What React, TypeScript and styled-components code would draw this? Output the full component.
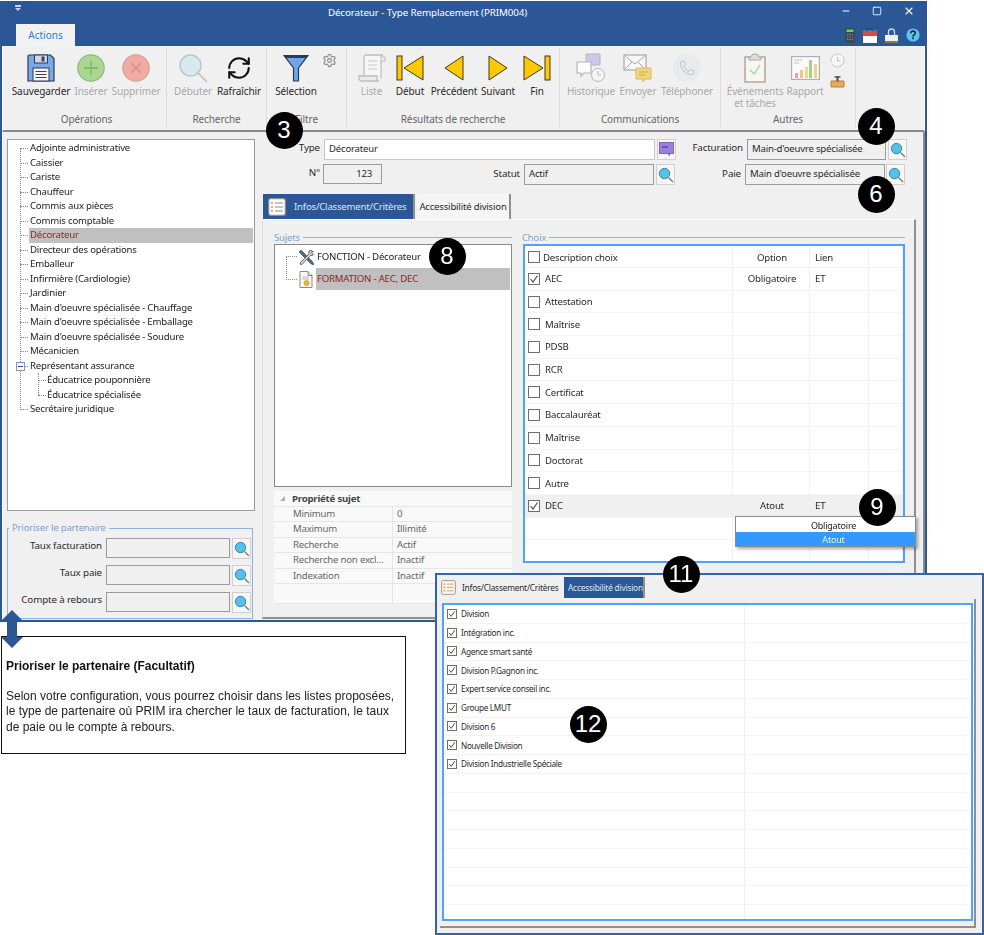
import React from 'react';
import styled, {createGlobalStyle} from 'styled-components';
import {RefreshCw, Settings, Phone, Minus, Square, X} from 'lucide-react';

const GlobalStyle = createGlobalStyle`
  html, body {
    margin: 0;
    padding: 0;
    background: #fff;
  }
  * {
    box-sizing: border-box;
  }
`;

const UI_FONT = `'Noto Sans', 'Open Sans', sans-serif`;
const BLUE = '#2b5797';
const LINE_BLUE = '#4da3ff';

const Page = styled.div`
  position: relative;
  width: 984px;
  height: 935px;
  overflow: hidden;
  padding-top: 1px;
  font-family: ${UI_FONT};
  font-size: 9.6px;
  letter-spacing: -0.2px;
  color: #2a2a2a;
  filter: blur(0.3px);
`;

const Window = styled.div`
  width: 927px;
  height: 621px;
  display: flex;
  flex-direction: column;
  background: ${BLUE};
  padding: 0 2px 2px 2px;
`;

const TitleBar = styled.div`
  position: relative;
  height: 23px;
  flex: none;
  display: flex;
  align-items: center;
  justify-content: center;
  color: #fff;
  font-size: 9.8px;
  letter-spacing: -0.1px;
  padding-right: 72px;
`;

const PinIcon = styled.span`
  position: absolute;
  left: 13px;
  top: 4px;
  width: 6px;
  height: 6px;
  border-top: 2px solid #c8d4e4;
  &::after {
    content: '';
    display: block;
    margin: 1px auto 0;
    width: 0;
    height: 0;
    border-left: 3px solid transparent;
    border-right: 3px solid transparent;
    border-top: 3px solid #c8d4e4;
  }
`;

const WindowControls = styled.div`
  position: absolute;
  right: 10px;
  top: 4px;
  display: flex;
  align-items: center;
  gap: 21px;
  color: #fff;
`;

const TabStrip = styled.div`
  height: 22px;
  flex: none;
  display: flex;
  align-items: flex-end;
  justify-content: space-between;
  padding: 0 5px 0 14px;
`;

const ActionsTab = styled.div`
  width: 59px;
  height: 22px;
  background: #f2f2f2;
  color: #2b7cd3;
  font-size: 10px;
  letter-spacing: 0;
  text-align: center;
  line-height: 22px;
`;

const QuickTools = styled.div`
  display: flex;
  align-items: center;
  gap: 8px;
  height: 22px;
`;

const Ribbon = styled.div`
  height: 86px;
  flex: none;
  display: flex;
  background: #f0f0f0;
  border-left: 1px solid #fff;
  border-right: 1px solid #fff;
  border-bottom: 2px solid #8a8a8a;
  padding: 2px 0 0 4px;
  font-size: 10px;
  letter-spacing: -0.1px;
`;

const RibbonGroup = styled.div<{$w: number}>`
  width: ${p => p.$w}px;
  height: 79px;
  flex: none;
  display: flex;
  flex-direction: column;
  justify-content: space-between;
  border-right: 1px solid #dcdcdc;
`;

const RibbonButtons = styled.div<{$pad?: number}>`
  display: flex;
  align-items: flex-start;
  padding: 5px 0 0 ${p => p.$pad ?? 0}px;
`;

const GroupLabel = styled.div`
  height: 15px;
  text-align: center;
  color: #666;
`;

const RibbonButton = styled.div<{$w: number; $off?: boolean}>`
  width: ${p => p.$w}px;
  flex: none;
  display: flex;
  flex-direction: column;
  align-items: center;
  color: ${p => (p.$off ? '#a9a9a9' : '#2a2a2a')};
  line-height: 12px;
  text-align: center;
  white-space: nowrap;
`;

const IconSlot = styled.div`
  height: 30px;
  margin-bottom: 2px;
  display: flex;
  align-items: center;
  justify-content: center;
`;

const SmallIcons = styled.div<{$w: number; $gap: number}>`
  width: ${p => p.$w}px;
  flex: none;
  display: flex;
  flex-direction: column;
  align-items: center;
  gap: ${p => p.$gap}px;
`;

const Body = styled.div`
  flex: 1;
  min-height: 0;
  display: flex;
  background: #f0f0f0;
  border-left: 1px solid #fff;
  border-right: 2px solid #8a8a8a;
`;

const LeftColumn = styled.div`
  width: 259px;
  flex: none;
  padding: 7px 0 0 4px;
`;

const TreeBox = styled.div`
  width: 248px;
  height: 372px;
  background: #fff;
  border: 1px solid #9a9a9a;
`;

const TreeList = styled.div`
  position: relative;
  margin-top: 1px;
  &::before {
    content: '';
    position: absolute;
    left: 12px;
    top: 7px;
    bottom: 7px;
    border-left: 1px dotted #888;
  }
`;

const TreeRow = styled.div<{$selected?: boolean; $child?: boolean}>`
  position: relative;
  margin-left: 21px;
  width: 224px;
  height: 14.5px;
  line-height: 14.5px;
  padding-left: ${p => (p.$child ? 18 : 1)}px;
  background: ${p => (p.$selected ? '#c0c0c0' : 'transparent')};
  color: ${p => (p.$selected ? '#9b1c1c' : '#222')};
  white-space: nowrap;
  &::before {
    content: '';
    position: absolute;
    top: 7px;
    left: ${p => (p.$child ? 9 : -9)}px;
    width: 8px;
    border-top: 1px dotted #888;
  }
`;

const TreeChildren = styled.div`
  position: relative;
  &::before {
    content: '';
    position: absolute;
    left: 30px;
    top: 0;
    bottom: 7px;
    border-left: 1px dotted #888;
  }
`;

const Expander = styled.span`
  position: absolute;
  left: -13px;
  top: 3px;
  width: 9px;
  height: 9px;
  background: #fff;
  border: 1px solid #7f9db9;
  &::after {
    content: '';
    position: absolute;
    left: 1px;
    right: 1px;
    top: 3px;
    border-top: 1px solid #224a8c;
  }
`;

const PartnerGroup = styled.fieldset`
  width: 246px;
  height: 97px;
  margin: 11px 0 0 0;
  padding: 4px 0 0 0;
  border: 1px solid #8fb2dc;
`;

const PartnerLegend = styled.legend`
  margin-left: 1px;
  padding: 0 3px;
  color: #7ba3d6;
  line-height: 12px;
`;

const PartnerRow = styled.div`
  display: flex;
  height: 27px;
`;

const FieldLabel = styled.div<{$w: number; $top?: number}>`
  width: ${p => p.$w}px;
  flex: none;
  padding-top: ${p => p.$top ?? 0}px;
  font-size: 9.8px;
  letter-spacing: -0.15px;
  line-height: 14px;
  text-align: right;
  white-space: nowrap;
`;

const TextField = styled.div<{$w: number; $h?: number; $off?: boolean; $ml?: number; $right?: boolean}>`
  width: ${p => p.$w}px;
  height: ${p => p.$h ?? 21}px;
  flex: none;
  margin-left: ${p => p.$ml ?? 4}px;
  padding: 0 ${p => (p.$right ? 9 : 4)}px;
  background: ${p => (p.$off ? '#f0f0f0' : '#fff')};
  border: 1.5px solid ${p => (p.$off ? '#9c9c9c' : '#c8c8c8')};
  line-height: 18px;
  text-align: ${p => (p.$right ? 'right' : 'left')};
  white-space: nowrap;
  overflow: hidden;
`;

const SquareButton = styled.div<{$ml?: number}>`
  width: 19px;
  height: 21px;
  flex: none;
  margin-left: ${p => p.$ml ?? 2}px;
  display: flex;
  align-items: center;
  justify-content: center;
  background: #f7f7f7;
  border: 1px solid #d0d0d0;
`;

const RightColumn = styled.div`
  flex: 1;
  min-width: 0;
  display: flex;
  flex-direction: column;
  padding-top: 7px;
`;

const FormRow = styled.div<{$mt?: number}>`
  display: flex;
  margin-top: ${p => p.$mt ?? 0}px;
`;

const TabRow = styled.div`
  display: flex;
  margin: 9px 0 0 1px;
  gap: 2px;
  height: 25px;
  flex: none;
`;

const PanelTab = styled.div<{$active?: boolean; $w: number; $small?: boolean; $plain?: boolean}>`
  width: ${p => p.$w}px;
  height: 100%;
  display: flex;
  align-items: center;
  justify-content: ${p => (p.$active || p.$plain ? 'flex-start' : 'center')};
  gap: ${p => (p.$plain ? 6 : 8)}px;
  padding-left: ${p => (p.$plain ? 1 : p.$active ? (p.$small ? 4 : 5) : 0)}px;
  background: ${p => (p.$active ? BLUE : p.$plain ? '#f0f0f0' : '#f5f5f5')};
  color: ${p => (p.$active ? '#dfe7f2' : '#2a2a2a')};
  border-right: 2px solid ${p => (p.$plain ? 'transparent' : '#8f8f8f')};
  font-size: ${p => (p.$small ? 8.3 : 9.6)}px;
  white-space: nowrap;
`;

const TabPanel = styled.div`
  flex: 1;
  min-height: 0;
  display: flex;
  gap: 11px;
  margin-right: 7px;
  margin-bottom: 1px;
  padding: 10px 0 0 11px;
  border-top: 1px solid #fff;
  border-left: 1px solid #dadada;
  border-right: 2px solid #8f8f8f;
  border-bottom: 2px solid #8f8f8f;
`;

const PanelColumn = styled.div<{$w: number}>`
  width: ${p => p.$w}px;
  flex: none;
`;

const SectionTitle = styled.div<{$ml?: number}>`
  height: 14px;
  display: flex;
  align-items: center;
  gap: 3px;
  margin-left: ${p => p.$ml ?? 0}px;
  color: #7ba3d6;
  &::after {
    content: '';
    flex: 1;
    border-top: 1px solid #8fb2dc;
  }
`;

const SubjectsBox = styled.div`
  position: relative;
  height: 243px;
  background: #fff;
  border: 1px solid #8a8a8a;
  padding: 1px 1px 0 0;
  &::before {
    content: '';
    position: absolute;
    left: 11px;
    top: 11px;
    width: 10px;
    height: 22px;
    border: 1px dotted #888;
    border-right: none;
  }
`;

const SubjectRow = styled.div`
  height: 22px;
  display: flex;
  align-items: center;
  white-space: nowrap;
  padding-left: 21px;
`;

const SubjectIcon = styled.div`
  width: 20px;
  flex: none;
  display: flex;
  justify-content: center;
`;

const SubjectText = styled.div<{$selected?: boolean}>`
  flex: 1;
  height: 100%;
  line-height: 21px;
  padding-left: 1px;
  background: ${p => (p.$selected ? '#c0c0c0' : 'transparent')};
  color: ${p => (p.$selected ? '#9b1c1c' : '#222')};
`;

const PropGrid = styled.div`
  margin-top: 4px;
  height: 113px;
  display: grid;
  grid-template-columns: 119px 1fr;
  grid-template-rows: 16px repeat(5, 15.4px) 1fr;
  background: #f9f9f9;
  color: #666;
`;

const PropHeader = styled.div`
  grid-column: 1 / 3;
  display: flex;
  align-items: center;
  padding-left: 6px;
  gap: 7px;
  font-weight: 700;
  color: #444;
  border-bottom: 1.5px solid #e6e6e6;
`;

const PropCaret = styled.span`
  width: 0;
  height: 0;
  border-left: 5px solid transparent;
  border-bottom: 5px solid #b0b0b0;
`;

const PropCell = styled.div<{$name?: boolean}>`
  padding-left: ${p => (p.$name ? 19 : 4)}px;
  border-bottom: 1.5px solid #e6e6e6;
  border-right: ${p => (p.$name ? '1.5px solid #e6e6e6' : 'none')};
  line-height: 14px;
  white-space: nowrap;
  overflow: hidden;
`;

const ChoiceGrid = styled.div`
  position: relative;
  height: 319px;
  padding-top: 1px;
  background: #fff;
  border: 2px solid ${LINE_BLUE};
  overflow: hidden;
`;

const ChoiceRow = styled.div<{$hot?: boolean; $first?: boolean}>`
  height: ${p => (p.$first ? 21 : 22.7)}px;
  display: grid;
  grid-template-columns: 208px 77px 59px 1fr;
  background: ${p => (p.$hot ? '#f0f0f0' : 'transparent')};
  border-bottom: 1px solid #f3f3f3;
`;

const ChoiceCell = styled.div<{$center?: boolean; $pad?: number}>`
  display: flex;
  align-items: center;
  justify-content: ${p => (p.$center ? 'center' : 'flex-start')};
  padding-left: ${p => p.$pad ?? 0}px;
  border-right: 1px solid #f0f0f0;
`;

const CheckBox = styled.span<{$size?: number}>`
  width: ${p => p.$size ?? 12}px;
  height: ${p => p.$size ?? 12}px;
  flex: none;
  display: flex;
  align-items: center;
  justify-content: center;
  background: #fff;
  border: 1px solid #6e6e6e;
`;

const ChoiceLabel = styled.span<{$first?: boolean}>`
  margin-left: ${p => (p.$first ? 3 : 5)}px;
`;

const DropMenu = styled.div`
  position: absolute;
  left: 735px;
  top: 516px;
  width: 181px;
  height: 31px;
  padding-left: 16px;
  background: #fff;
  border: 1px solid #8a8a8a;
  box-shadow: 2px 2px 3px rgba(0, 0, 0, 0.35);
  font-size: 9px;
  text-align: center;
`;

const DropItem = styled.div<{$active?: boolean}>`
  height: ${p => (p.$active ? 14 : 15)}px;
  margin-left: ${p => (p.$active ? -16 : 0)}px;
  padding-left: ${p => (p.$active ? 16 : 0)}px;
  line-height: ${p => (p.$active ? 15 : 18)}px;
  background: ${p => (p.$active ? '#3399ff' : 'transparent')};
  color: ${p => (p.$active ? '#eaf4ff' : '#222')};
`;

const Badge = styled.div<{$x: number; $y: number}>`
  position: absolute;
  left: ${p => p.$x - 18.5}px;
  top: ${p => p.$y - 18.5}px;
  width: 37px;
  height: 37px;
  display: flex;
  align-items: center;
  justify-content: center;
  border-radius: 50%;
  background: #000;
  color: #fff;
  font-family: 'Liberation Sans', Arial, sans-serif;
  font-size: 24px;
  letter-spacing: 0;
`;

const NoteBox = styled.div`
  width: 405px;
  height: 118px;
  margin: 14px 0 0 1px;
  padding: 22px 4px 0 4px;
  background: #fff;
  border: 1px solid #111;
  font-family: 'Liberation Sans', Arial, sans-serif;
  font-size: 12px;
  letter-spacing: 0;
  color: #222;
`;

const NoteTitle = styled.div`
  font-weight: 700;
  color: #111;
  line-height: 14px;
  margin-bottom: 16px;
`;

const NoteText = styled.div`
  line-height: 15.4px;
`;

const UpDownArrow = styled.svg`
  position: absolute;
  left: 1px;
  top: 610px;
`;

const DivisionWindow = styled.div`
  position: absolute;
  left: 435px;
  top: 573px;
  width: 549px;
  height: 362px;
  background: #f0f0f0;
  border: 2px solid #3563a5;
  padding: 2px 3px 0 3px;
`;

const DivisionTabs = styled.div`
  display: flex;
  height: 21px;
  gap: 1px;
`;

const DivisionPanel = styled.div`
  height: 329px;
  width: 536px;
  margin-top: 1px;
  padding: 4px 0 0 2px;
  border-right: 2px solid #8f8f8f;
  border-bottom: 2px solid #8f8f8f;
`;

const DivisionGrid = styled.div`
  width: 531px;
  height: 318px;
  background: #fff;
  border: 2px solid ${LINE_BLUE};
  overflow: hidden;
`;

const DivisionRow = styled.div`
  height: 18.75px;
  display: grid;
  grid-template-columns: 301px 1fr;
  border-bottom: 1px solid #f3f3f3;
  font-size: 8.2px;
  letter-spacing: -0.3px;
`;

const DivisionCell = styled.div`
  display: flex;
  align-items: center;
  gap: 4px;
  padding-left: 3px;
  border-right: 1px solid #f0f0f0;
`;

const Tick = () => (
  <svg width="10" height="10" viewBox="0 0 10 10">
    <path d="M1.5 5 L4 8 L8.5 1.5" fill="none" stroke="#444" strokeWidth="1.1" />
  </svg>
);

const SmallTick = () => (
  <svg width="8" height="8" viewBox="0 0 10 10">
    <path d="M1.5 5 L4 8 L8.5 1.5" fill="none" stroke="#444" strokeWidth="1.2" />
  </svg>
);

const SearchIcon = () => (
  <svg width="16" height="16" viewBox="0 0 16 16">
    <circle cx="6.5" cy="6.5" r="5.2" fill="#4fc3ea" stroke="#2e6f8c" strokeWidth="0.8" />
    <line x1="10.5" y1="10.5" x2="15" y2="15" stroke="#777" strokeWidth="1.3" />
  </svg>
);

const NoteIcon = () => (
  <svg width="15" height="15" viewBox="0 0 15 15">
    <rect x="0.5" y="0.5" width="14" height="11" fill="#9a7fdc" stroke="#7b62bd" />
    <path d="M8 11.5 L11 14.5 L11 11.5z" fill="#7b62bd" />
    <rect x="3" y="4" width="6" height="2" fill="#6a52a8" />
  </svg>
);

const FloppyIcon = () => (
  <svg width="28" height="28" viewBox="0 0 28 28">
    <path d="M2 1h21.5l3.5 3.5V27H1V2z" fill="#7aa9ea" stroke="#2d3b4e" strokeWidth="1.2" />
    <rect x="7.5" y="1" width="13" height="8" fill="#cfd8e4" stroke="#2d3b4e" />
    <rect x="14.5" y="2.5" width="3" height="5" fill="#3a4a5e" />
    <rect x="6" y="14" width="16" height="13" fill="#f4f4f4" stroke="#2d3b4e" />
    <path d="M8.5 17.5h11M8.5 20.5h11M8.5 23.5h11" stroke="#444" />
  </svg>
);

const CircleAction = ({fill, edge, mark, cross}: {fill: string; edge: string; mark: string; cross?: boolean}) => (
  <svg width="28" height="28" viewBox="0 0 28 28">
    <circle cx="14" cy="14" r="13.2" fill={fill} stroke={edge} strokeWidth="1.2" />
    <path d={cross ? 'M9 9 L19 19 M19 9 L9 19' : 'M14 7 V21 M7 14 H21'} stroke={mark} strokeWidth="1.3" />
  </svg>
);

const PaleLens = () => (
  <svg width="30" height="30" viewBox="0 0 30 30">
    <circle cx="12.5" cy="12.5" r="10.5" fill="#d6e9ef" stroke="#b9c6c9" strokeWidth="1.4" />
    <line x1="20" y1="20" x2="29" y2="29" stroke="#bdbdbd" strokeWidth="1.6" />
  </svg>
);

const FunnelIcon = () => (
  <svg width="26" height="28" viewBox="0 0 26 28">
    <path d="M1 1.5 H25 L15.5 14 V27 H10.5 V14 Z" fill="#6fa5ea" stroke="#2d3b4e" strokeWidth="1.2" />
    <path d="M1 1.5 H25 L23 4 H3 Z" fill="#2d3b4e" />
  </svg>
);

const ScrollIcon = () => (
  <svg width="28" height="28" viewBox="0 0 28 28">
    <path d="M6 22 V4 Q6 1 9 1 H25 Q23 1 23 4 V24" fill="#f6f6f6" stroke="#bdbdbd" strokeWidth="1.3" />
    <path d="M23 3 H27 V7 H23" fill="#ececec" stroke="#bdbdbd" />
    <path d="M1 22 H19 V25 Q19 27 21 27 H4 Q1 27 1 24 Z" fill="#ececec" stroke="#bdbdbd" strokeWidth="1.3" />
    <path d="M10 7 H19 M10 11 H19 M10 15 H19" stroke="#c8c8c8" />
  </svg>
);

const NavIcon = ({kind}: {kind: 'first' | 'prev' | 'next' | 'last'}) => {
  const fill = '#ffc800';
  const edge = '#3c3a22';
  if (kind === 'first') {
    return (
      <svg width="28" height="26" viewBox="0 0 28 26">
        <rect x="1" y="1" width="5" height="24" fill={fill} stroke={edge} />
        <path d="M8 13 L27 1 V25 Z" fill={fill} stroke={edge} />
      </svg>
    );
  }
  if (kind === 'last') {
    return (
      <svg width="28" height="26" viewBox="0 0 28 26">
        <path d="M20 13 L1 1 V25 Z" fill={fill} stroke={edge} />
        <rect x="22" y="1" width="5" height="24" fill={fill} stroke={edge} />
      </svg>
    );
  }
  return (
    <svg width="20" height="26" viewBox="0 0 20 26">
      <path d={kind === 'prev' ? 'M1 13 L19 1 V25 Z' : 'M19 13 L1 1 V25 Z'} fill={fill} stroke={edge} />
    </svg>
  );
};

const HistoryIcon = () => (
  <svg width="30" height="30" viewBox="0 0 30 30">
    <path d="M10 1 H24 V12 H10 Z" fill="#cfc6f0" stroke="#b5b5b5" />
    <path d="M1 9 H15 V20 H8 L5 23 V20 H1 Z" fill="#fafafa" stroke="#b5b5b5" strokeWidth="1.2" />
    <circle cx="22" cy="22" r="6.5" fill="#f5f5f5" stroke="#b5b5b5" />
    <path d="M22 18 V22 H25" fill="none" stroke="#b5b5b5" />
  </svg>
);

const MailIcon = () => (
  <svg width="30" height="30" viewBox="0 0 30 30">
    <rect x="1" y="2" width="22" height="15" fill="#f7f7f7" stroke="#aaa" strokeWidth="1.2" />
    <path d="M1 2 L12 11 L23 2 M1 17 L9 9 M23 17 L15 9" fill="none" stroke="#aaa" />
    <path d="M13 15 H28 V26 H22 L20 29 V26 H13 Z" fill="#f2d77a" stroke="#d9bb58" />
    <path d="M16 19 H25 M16 22 H22" stroke="#c9a93f" />
  </svg>
);

const PhoneBubble = styled.div`
  width: 28px;
  height: 28px;
  border-radius: 50%;
  background: #e6ecec;
  display: flex;
  align-items: center;
  justify-content: center;
  color: #bcbcbc;
`;

const ClipboardIcon = () => (
  <svg width="22" height="30" viewBox="0 0 22 30">
    <rect x="1" y="4" width="20" height="25" fill="#f7f7f2" stroke="#b5a78f" strokeWidth="1.5" />
    <path d="M7 4 Q7 1 11 1 Q15 1 15 4 H17 V7 H5 V4 Z" fill="#dcdcdc" stroke="#aaa" />
    <path d="M6 17 L10 21 L16 12" fill="none" stroke="#9ed49e" strokeWidth="1.3" />
  </svg>
);

const ReportIcon = () => (
  <svg width="29" height="24" viewBox="0 0 29 24">
    <rect x="0.6" y="0.6" width="27.8" height="22.8" fill="#fafafa" stroke="#b0b0b0" strokeWidth="1.2" />
    <path d="M3 4 H11 M3 7 H8" stroke="#bcbcbc" />
    <rect x="4" y="17" width="3" height="5" fill="#e2a6a0" />
    <rect x="9" y="14" width="3" height="8" fill="#efc48c" />
    <rect x="14" y="11" width="3" height="11" fill="#f0d98a" />
    <rect x="18" y="4" width="3" height="18" fill="#a9cf8e" />
    <rect x="23" y="8" width="3" height="14" fill="#e9d68a" />
  </svg>
);

const ClockIcon = () => (
  <svg width="15" height="15" viewBox="0 0 15 15">
    <circle cx="7.5" cy="7.5" r="6.5" fill="#f6f6f6" stroke="#c4c4c4" strokeDasharray="16 2" />
    <path d="M7.5 4 V8 H10.5" fill="none" stroke="#bdbdbd" />
  </svg>
);

const TrayIcon = () => (
  <svg width="15" height="13" viewBox="0 0 15 13">
    <path d="M1 6 H14 V12 H1 Z" fill="#e7ab5c" stroke="#b9823c" />
    <path d="M4 6 Q7.5 9 11 6" fill="#c98a3a" />
    <rect x="6.5" y="1" width="2" height="5" fill="#5a4a3a" />
    <path d="M4.5 2 H10.5" stroke="#5a4a3a" strokeWidth="1.4" />
  </svg>
);

const CalculatorIcon = () => (
  <svg width="10" height="15" viewBox="0 0 10 15">
    <rect width="10" height="15" fill="#3a4a50" />
    <rect x="1.5" y="1.5" width="7" height="2.5" fill="#6fce5a" />
    <path d="M2 6.5 H8 M2 9 H8 M2 11.5 H8" stroke="#7e8c92" strokeDasharray="1.5 1" />
  </svg>
);

const CalendarIcon = () => (
  <svg width="14" height="15" viewBox="0 0 14 15">
    <rect y="3" width="14" height="12" fill="#fff" stroke="#d8d8d8" strokeWidth="0.5" />
    <rect y="3" width="14" height="5" fill="#dc4a3c" />
    <path d="M7 0.5 L3 3 M7 0.5 L11 3" stroke="#333" strokeWidth="0.7" />
  </svg>
);

const LockIcon = () => (
  <svg width="13" height="15" viewBox="0 0 13 15">
    <path d="M3.5 7 V4 Q3.5 1 6.5 1 Q9.5 1 9.5 4 V7" fill="none" stroke="#ccd3d8" strokeWidth="1.4" />
    <rect y="7" width="13" height="6" fill="#eef0f0" />
    <rect y="13" width="13" height="2" fill="#8a7a4a" />
  </svg>
);

const HelpIcon = () => (
  <svg width="14" height="14" viewBox="0 0 14 14">
    <circle cx="7" cy="7" r="6.6" fill="#5bc3ec" />
    <path d="M4.8 5.2 Q5 3 7 3 Q9.2 3 9.2 5 Q9.2 6.2 8 6.9 Q7 7.4 7 8.7" fill="none" stroke="#12212c" strokeWidth="1.5" />
    <rect x="6.2" y="9.6" width="1.6" height="1.6" fill="#12212c" />
  </svg>
);

const ListTabIcon = ({size = 18, soft}: {size?: number; soft?: boolean}) => (
  <svg width={size} height={size} viewBox="0 0 18 18">
    <rect x="0.7" y="0.7" width="16.6" height="16.6" rx="2" fill={soft ? '#f6f4f2' : '#fff'} stroke={soft ? '#a89a90' : '#8e8e8e'} strokeWidth="1.2" />
    <path d="M3 5 H5 M3 9 H5 M3 13 H5" stroke="#ee8a3c" strokeWidth="1.6" />
    <path d="M7 5 H15 M7 9 H15 M7 13 H15" stroke={soft ? '#e8a878' : '#888'} strokeWidth="1.2" />
  </svg>
);

const ToolsIcon = () => (
  <svg width="17" height="17" viewBox="0 0 17 17">
    <path d="M1 3 L3 1 L9 7 L14 12 L16 15 L15 16 L12 14 L7 9 Z" fill="#4a6a8c" stroke="#333" strokeWidth="0.5" />
    <path d="M15.5 3 Q13 0 11 2 Q10 4 11 5 L2 14 Q2 16 4 15.5 L12.5 6.5 Q14.5 7 15.5 5.5 L13.5 4 L14 2.5 Z" fill="#c9ced2" stroke="#444" strokeWidth="0.7" />
  </svg>
);

const CertificateIcon = () => (
  <svg width="14" height="17" viewBox="0 0 14 17">
    <path d="M1 0.5 H9 L13 4.5 V16.5 H1 Z" fill="#fafafa" stroke="#888" />
    <path d="M9 0.5 V4.5 H13" fill="#e0e0e0" stroke="#888" />
    <path d="M3 6 H10 M3 8 H10" stroke="#bbb" />
    <circle cx="7.5" cy="12" r="2.6" fill="#f2b630" stroke="#c58a10" strokeWidth="0.6" />
  </svg>
);

const JOBS = [
  'Adjointe administrative',
  'Caissier',
  'Cariste',
  'Chauffeur',
  'Commis aux pièces',
  'Commis comptable',
  'Décorateur',
  'Directeur des opérations',
  'Emballeur',
  'Infirmière (Cardiologie)',
  'Jardinier',
  "Main d'oeuvre spécialisée - Chauffage",
  "Main d'oeuvre spécialisée - Emballage",
  "Main d'oeuvre spécialisée - Soudure",
  'Mécanicien',
];

const CHOICES: {label: string; checked?: boolean; option?: string; link?: string; hot?: boolean}[] = [
  {label: 'Description choix', option: 'Option', link: 'Lien'},
  {label: 'AEC', checked: true, option: 'Obligatoire', link: 'ET'},
  {label: 'Attestation'},
  {label: 'Maîtrise'},
  {label: 'PDSB'},
  {label: 'RCR'},
  {label: 'Certificat'},
  {label: 'Baccalauréat'},
  {label: 'Maîtrise'},
  {label: 'Doctorat'},
  {label: 'Autre'},
  {label: 'DEC', checked: true, option: 'Atout', link: 'ET', hot: true},
  {label: ''},
  {label: ''},
];

const PROPS = [
  ['Minimum', '0'],
  ['Maximum', 'Illimité'],
  ['Recherche', 'Actif'],
  ['Recherche non excl...', 'Inactif'],
  ['Indexation', 'Inactif'],
  ['', ''],
];

const DIVISIONS = [
  'Division',
  'Intégration inc.',
  'Agence smart santé',
  'Division P.Gagnon inc.',
  'Expert service conseil inc.',
  'Groupe LMUT',
  'Division 6',
  'Nouvelle Division',
  'Division Industrielle Spéciale',
];

const BADGES = [
  {n: 3, x: 284, y: 130},
  {n: 4, x: 876, y: 126},
  {n: 6, x: 876, y: 194},
  {n: 8, x: 447, y: 256},
  {n: 9, x: 877, y: 507},
  {n: 11, x: 681, y: 574},
  {n: 12, x: 588, y: 724},
];

const PartnerField = ({label}: {label: string}) => (
  <PartnerRow>
    <FieldLabel $w={94} $top={1}>{label}</FieldLabel>
    <TextField $w={124} $h={20} $off />
    <SquareButton><SearchIcon /></SquareButton>
  </PartnerRow>
);

export default function App() {
  return (
    <Page>
      <GlobalStyle />
      <Window>
        <TitleBar>
          <PinIcon />
          Décorateur - Type Remplacement (PRIM004)
          <WindowControls>
            <Minus size={10} strokeWidth={2.4} />
            <Square size={10} strokeWidth={2} />
            <X size={12} strokeWidth={2.2} />
          </WindowControls>
        </TitleBar>
        <TabStrip>
          <ActionsTab>Actions</ActionsTab>
          <QuickTools>
            <CalculatorIcon />
            <CalendarIcon />
            <LockIcon />
            <HelpIcon />
          </QuickTools>
        </TabStrip>
        <Ribbon>
          <RibbonGroup $w={160}>
            <RibbonButtons>
              <RibbonButton $w={68}><IconSlot><FloppyIcon /></IconSlot>Sauvegarder</RibbonButton>
              <RibbonButton $w={32} $off><IconSlot><CircleAction fill="#a9d78f" edge="#8fb978" mark="#7faf68" /></IconSlot>Insérer</RibbonButton>
              <RibbonButton $w={58} $off><IconSlot><CircleAction fill="#f2aaa2" edge="#c9a89c" mark="#d28d84" cross /></IconSlot>Supprimer</RibbonButton>
            </RibbonButtons>
            <GroupLabel>Opérations</GroupLabel>
          </RibbonGroup>
          <RibbonGroup $w={100}>
            <RibbonButtons $pad={1}>
              <RibbonButton $w={50} $off><IconSlot><PaleLens /></IconSlot>Débuter</RibbonButton>
              <RibbonButton $w={42}><IconSlot><RefreshCw size={26} strokeWidth={1.9} color="#111" /></IconSlot>Rafraîchir</RibbonButton>
            </RibbonButtons>
            <GroupLabel>Recherche</GroupLabel>
          </RibbonGroup>
          <RibbonGroup $w={80}>
            <RibbonButtons $pad={3}>
              <RibbonButton $w={52}><IconSlot><FunnelIcon /></IconSlot>Sélection</RibbonButton>
              <SmallIcons $w={14} $gap={0}><Settings size={15} color="#8a8a8a" strokeWidth={1.8} /></SmallIcons>
            </RibbonButtons>
            <GroupLabel>Filtre</GroupLabel>
          </RibbonGroup>
          <RibbonGroup $w={213}>
            <RibbonButtons $pad={6}>
              <RibbonButton $w={37} $off><IconSlot><ScrollIcon /></IconSlot>Liste</RibbonButton>
              <RibbonButton $w={40}><IconSlot><NavIcon kind="first" /></IconSlot>Début</RibbonButton>
              <RibbonButton $w={48}><IconSlot><NavIcon kind="prev" /></IconSlot>Précédent</RibbonButton>
              <RibbonButton $w={40}><IconSlot><NavIcon kind="next" /></IconSlot>Suivant</RibbonButton>
              <RibbonButton $w={38}><IconSlot><NavIcon kind="last" /></IconSlot>Fin</RibbonButton>
            </RibbonButtons>
            <GroupLabel>Résultats de recherche</GroupLabel>
          </RibbonGroup>
          <RibbonGroup $w={161}>
            <RibbonButtons $pad={5}>
              <RibbonButton $w={52} $off><IconSlot><HistoryIcon /></IconSlot>Historique</RibbonButton>
              <RibbonButton $w={42} $off><IconSlot><MailIcon /></IconSlot>Envoyer</RibbonButton>
              <RibbonButton $w={56} $off><IconSlot><PhoneBubble><Phone size={16} strokeWidth={1.4} /></PhoneBubble></IconSlot>Téléphoner</RibbonButton>
            </RibbonButtons>
            <GroupLabel>Communications</GroupLabel>
          </RibbonGroup>
          <RibbonGroup $w={135}>
            <RibbonButtons $pad={6}>
              <RibbonButton $w={56} $off><IconSlot><ClipboardIcon /></IconSlot>Évènements<br />et tâches</RibbonButton>
              <RibbonButton $w={44} $off><IconSlot><ReportIcon /></IconSlot>Rapport</RibbonButton>
              <SmallIcons $w={20} $gap={7}><ClockIcon /><TrayIcon /></SmallIcons>
            </RibbonButtons>
            <GroupLabel>Autres</GroupLabel>
          </RibbonGroup>
        </Ribbon>
        <Body>
          <LeftColumn>
            <TreeBox>
              <TreeList>
                {JOBS.map(job => (
                  <TreeRow key={job} $selected={job === 'Décorateur'}>{job}</TreeRow>
                ))}
                <TreeRow>
                  <Expander />
                  Représentant assurance
                </TreeRow>
                <TreeChildren>
                  <TreeRow $child>Éducatrice pouponnière</TreeRow>
                  <TreeRow $child>Éducatrice spécialisée</TreeRow>
                </TreeChildren>
                <TreeRow>Secrétaire juridique</TreeRow>
              </TreeList>
            </TreeBox>
            <PartnerGroup>
              <PartnerLegend>Prioriser le partenaire</PartnerLegend>
              <PartnerField label="Taux facturation" />
              <PartnerField label="Taux paie" />
              <PartnerField label="Compte à rebours" />
            </PartnerGroup>
          </LeftColumn>
          <RightColumn>
            <FormRow>
              <FieldLabel $w={58} $top={2}>Type</FieldLabel>
              <TextField $w={331}>Décorateur</TextField>
              <SquareButton><NoteIcon /></SquareButton>
              <FieldLabel $w={67} $top={2}>Facturation</FieldLabel>
              <TextField $w={139} $off>Main-d'oeuvre spécialisée</TextField>
              <SquareButton><SearchIcon /></SquareButton>
            </FormRow>
            <FormRow $mt={4}>
              <FieldLabel $w={58} $top={2}>N°</FieldLabel>
              <TextField $w={59} $h={20} $ml={3} $off $right>123</TextField>
              <FieldLabel $w={138} $top={3}>Statut</FieldLabel>
              <TextField $w={130} $off>Actif</TextField>
              <SquareButton><SearchIcon /></SquareButton>
              <FieldLabel $w={66} $top={3}>Paie</FieldLabel>
              <TextField $w={140} $off>Main d'oeuvre spécialisée</TextField>
              <SquareButton $ml={1}><SearchIcon /></SquareButton>
            </FormRow>
            <TabRow>
              <PanelTab $active $w={152}><ListTabIcon />Infos/Classement/Critères</PanelTab>
              <PanelTab $w={94}>Accessibilité division</PanelTab>
            </TabRow>
            <TabPanel>
              <PanelColumn $w={238}>
                <SectionTitle>Sujets</SectionTitle>
                <SubjectsBox>
                  <SubjectRow><SubjectIcon><ToolsIcon /></SubjectIcon><SubjectText>FONCTION - Décorateur</SubjectText></SubjectRow>
                  <SubjectRow><SubjectIcon><CertificateIcon /></SubjectIcon><SubjectText $selected>FORMATION - AEC, DEC</SubjectText></SubjectRow>
                </SubjectsBox>
                <PropGrid>
                  <PropHeader><PropCaret />Propriété sujet</PropHeader>
                  {PROPS.map(([name, value], i) => (
                    <React.Fragment key={i}>
                      <PropCell $name>{name}</PropCell>
                      <PropCell>{value}</PropCell>
                    </React.Fragment>
                  ))}
                </PropGrid>
              </PanelColumn>
              <PanelColumn $w={382}>
                <SectionTitle $ml={-1}>Choix</SectionTitle>
                <ChoiceGrid>
                  {CHOICES.map((c, i) => (
                    <ChoiceRow key={i} $hot={c.hot} $first={i === 0}>
                      <ChoiceCell $pad={3}>
                        {c.label && <CheckBox>{c.checked && <Tick />}</CheckBox>}
                        {c.label && <ChoiceLabel $first={i === 0}>{c.label}</ChoiceLabel>}
                      </ChoiceCell>
                      <ChoiceCell $center $pad={2}>{c.option}</ChoiceCell>
                      <ChoiceCell $pad={5}>{c.link}</ChoiceCell>
                      <ChoiceCell />
                    </ChoiceRow>
                  ))}
                </ChoiceGrid>
              </PanelColumn>
            </TabPanel>
          </RightColumn>
        </Body>
      </Window>
      <NoteBox>
        <NoteTitle>Prioriser le partenaire (Facultatif)</NoteTitle>
        <NoteText>
          Selon votre configuration, vous pourrez choisir dans les listes proposées,
          <br />
          le type de partenaire où PRIM ira chercher le taux de facturation, le taux
          <br />
          de paie ou le compte à rebours.
        </NoteText>
      </NoteBox>
      <UpDownArrow width="22" height="38" viewBox="0 0 22 38">
        <path d="M11 0 L22 11 H16 V27 H22 L11 38 L0 27 H6 V11 H0 Z" fill={BLUE} />
      </UpDownArrow>
      <DropMenu>
        <DropItem>Obligatoire</DropItem>
        <DropItem $active>Atout</DropItem>
      </DropMenu>
      <DivisionWindow>
        <DivisionTabs>
          <PanelTab $w={123} $small $plain><ListTabIcon size={15} soft />Infos/Classement/Critères</PanelTab>
          <PanelTab $w={81} $active $small>Accessibilité division</PanelTab>
        </DivisionTabs>
        <DivisionPanel>
          <DivisionGrid>
            {Array.from({length: 17}).map((_, i) => (
              <DivisionRow key={i}>
                <DivisionCell>
                  {DIVISIONS[i] && <CheckBox $size={10}><SmallTick /></CheckBox>}
                  {DIVISIONS[i]}
                </DivisionCell>
              </DivisionRow>
            ))}
          </DivisionGrid>
        </DivisionPanel>
      </DivisionWindow>
      {BADGES.map(b => (
        <Badge key={b.n} $x={b.x} $y={b.y}>{b.n}</Badge>
      ))}
    </Page>
  );
}
